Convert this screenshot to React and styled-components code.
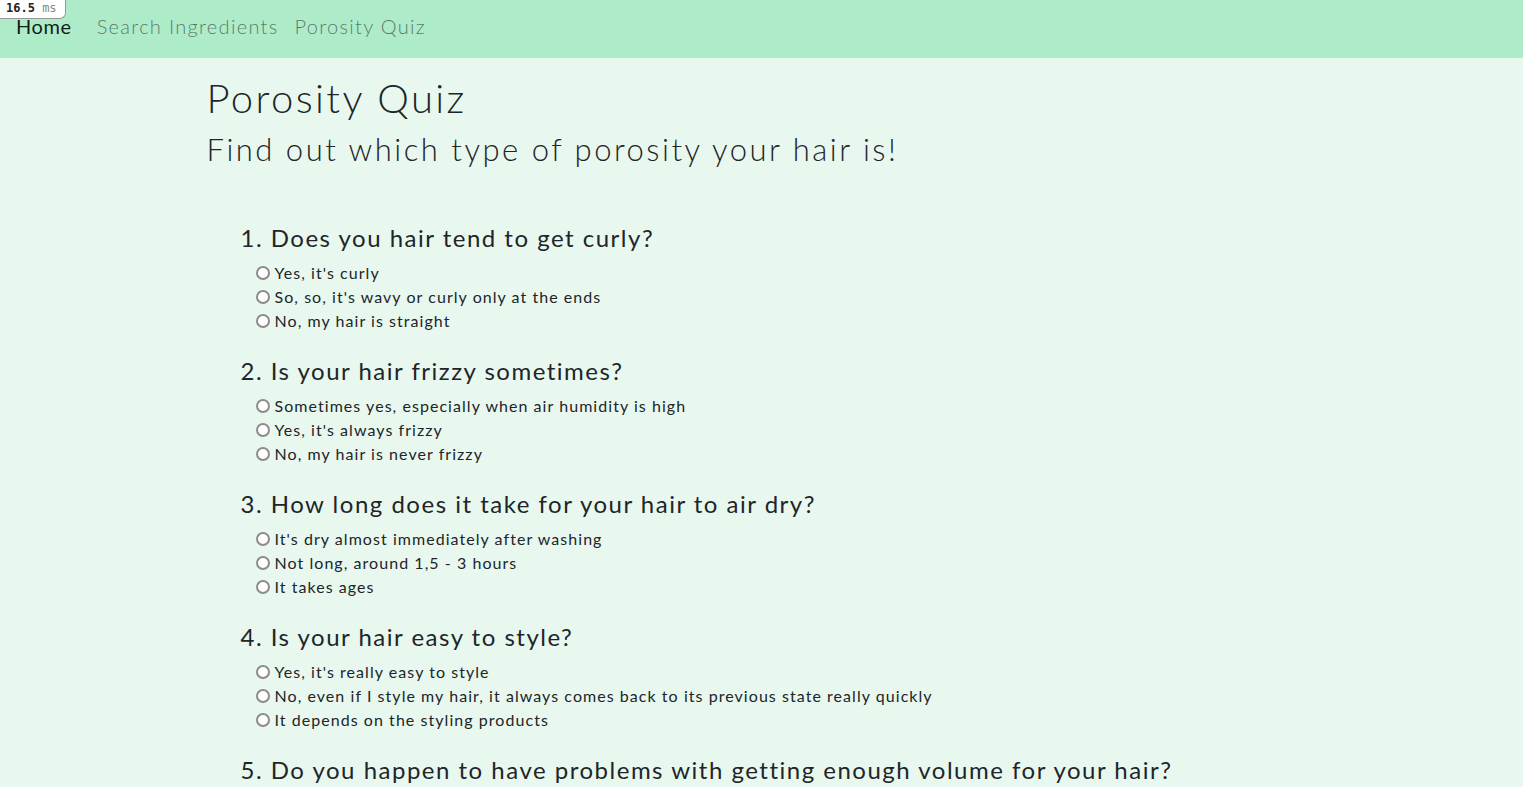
import React from 'react'
import styled, { createGlobalStyle } from 'styled-components'

const GlobalStyle = createGlobalStyle`
  html, body {
    margin: 0;
    padding: 0;
    background: #e8f8ef;
    color: #212529;
    font-family: "Lato", "Noto Sans", sans-serif;
  }
  * { box-sizing: border-box; }
`;

const Nav = styled.nav`
  height: 58px;
  background-color: #adebc9;
  display: flex;
  align-items: center;
  padding: 0 16px 6px;
`;

const NavLink = styled.a`
  font-size: 20px;
  font-weight: ${p => (p.$brand ? 400 : 300)};
  letter-spacing: ${p => (p.$brand ? '0.6px' : '1.3px')};
  color: ${p => (p.$brand ? 'rgba(0,0,0,0.9)' : 'rgba(0,0,0,0.5)')};
  margin-right: ${p => (p.$brand ? '25px' : '16px')};
  text-decoration: none;
`;

const Meter = styled.div`
  position: absolute;
  top: 0;
  left: 0;
  padding: 0 8px 0 6px;
  height: 19px;
  background: #fff;
  border: 1px solid #999;
  border-top: none;
  border-left: none;
  border-bottom-right-radius: 6px;
  font-family: "DejaVu Sans Mono", monospace;
  font-size: 12px;
  line-height: 17px;
  color: #222;
  b { font-weight: bold; }
  span { color: #888; }
`;

const Container = styled.main`
  max-width: 1140px;
  margin: 0 auto;
  padding: 16px 15px 0;
`;

const Title = styled.h1`
  margin: 0 0 8px;
  font-size: 40px;
  line-height: 48px;
  font-weight: 300;
  letter-spacing: 2.4px;
`;

const Subtitle = styled.h2`
  margin: 0 0 55px;
  font-size: 31px;
  line-height: 38px;
  font-weight: 300;
  letter-spacing: 2.5px;
`;

const Form = styled.form`
  padding-left: 34px;
  display: flex;
  flex-direction: column;
  gap: 24px;
`;

const Question = styled.fieldset`
  border: none;
  margin: 0;
  padding: 0;
`;

const Prompt = styled.h4`
  margin: 0 0 8px;
  font-size: 24px;
  line-height: 29px;
  font-weight: 400;
  letter-spacing: 1.5px;
`;

const Options = styled.div`
  padding-left: 15px;
  display: flex;
  flex-direction: column;
`;

const Option = styled.label`
  display: flex;
  align-items: center;
  height: 24px;
  font-size: 16px;
  letter-spacing: 1.05px;
  font-weight: 400;
`;

const Radio = styled.input.attrs({ type: 'radio' })`
  appearance: none;
  margin: 2px 5px 0 0;
  width: 14px;
  height: 14px;
  border: 2px solid #8c8c8c;
  border-radius: 50%;
  background: #fff;
  flex-shrink: 0;
`;

const questions = [
  {
    q: 'Does you hair tend to get curly?',
    a: ["Yes, it's curly", "So, so, it's wavy or curly only at the ends", 'No, my hair is straight'],
  },
  {
    q: 'Is your hair frizzy sometimes?',
    a: ['Sometimes yes, especially when air humidity is high', "Yes, it's always frizzy", 'No, my hair is never frizzy'],
  },
  {
    q: 'How long does it take for your hair to air dry?',
    a: ["It's dry almost immediately after washing", 'Not long, around 1,5 - 3 hours', 'It takes ages'],
  },
  {
    q: 'Is your hair easy to style?',
    a: [
      "Yes, it's really easy to style",
      'No, even if I style my hair, it always comes back to its previous state really quickly',
      'It depends on the styling products',
    ],
  },
  {
    q: 'Do you happen to have problems with getting enough volume for your hair?',
    a: ["Yes, it's always flat", 'Sometimes', 'No, never'],
  },
];

const App = () => {
  return (
    <>
      <GlobalStyle />
      <Nav>
        <NavLink $brand href="#">Home</NavLink>
        <NavLink href="#">Search Ingredients</NavLink>
        <NavLink href="#">Porosity Quiz</NavLink>
      </Nav>
      <Meter><b>16.5</b> <span>ms</span></Meter>
      <Container>
        <Title>Porosity Quiz</Title>
        <Subtitle>Find out which type of porosity your hair is!</Subtitle>
        <Form>
          {questions.map((item, i) => (
            <Question key={i}>
              <Prompt>{i + 1}. {item.q}</Prompt>
              <Options>
                {item.a.map((ans, j) => (
                  <Option key={j}>
                    <Radio name={`q${i}`} />
                    {ans}
                  </Option>
                ))}
              </Options>
            </Question>
          ))}
        </Form>
      </Container>
    </>
  )
}

export default App
